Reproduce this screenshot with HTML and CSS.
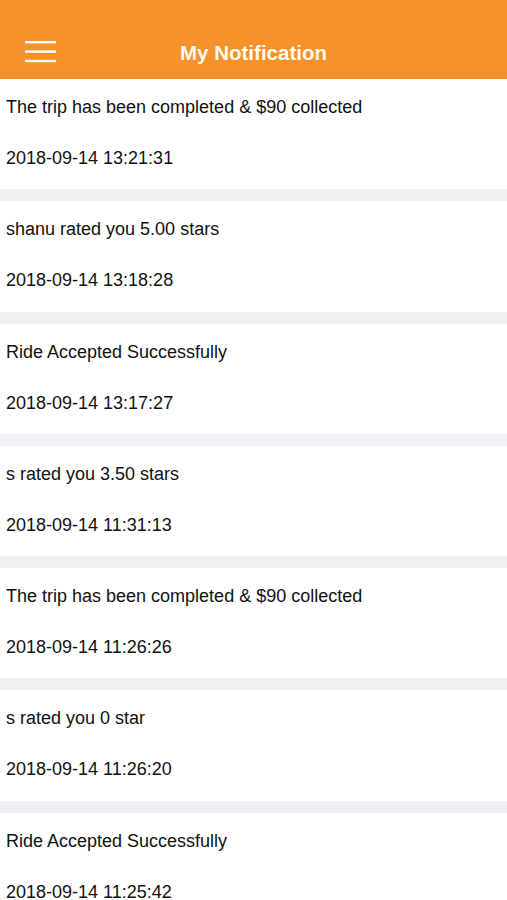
FILE: index.html
```html
<!DOCTYPE html>
<html>
<head>
<meta charset="utf-8">
<link rel="stylesheet" href="styles.css">
</head>
<body>
<header class="bar">
  <svg class="menu" width="31" height="22" viewBox="0 0 31 22">
    <rect x="0" y="0" width="31" height="2.4" fill="#fff"/>
    <rect x="0" y="9.4" width="31" height="2.4" fill="#fff"/>
    <rect x="0" y="18.8" width="31" height="2.4" fill="#fff"/>
  </svg>
  <h1 class="title">My Notification</h1>
</header>
<main class="list">
  <div class="card"><div class="msg">The trip has been completed &amp; $90 collected</div><div class="date">2018-09-14 13:21:31</div></div>
  <div class="card"><div class="msg">shanu rated you 5.00 stars</div><div class="date">2018-09-14 13:18:28</div></div>
  <div class="card"><div class="msg">Ride Accepted Successfully</div><div class="date">2018-09-14 13:17:27</div></div>
  <div class="card"><div class="msg">s rated you 3.50 stars</div><div class="date">2018-09-14 11:31:13</div></div>
  <div class="card"><div class="msg">The trip has been completed &amp; $90 collected</div><div class="date">2018-09-14 11:26:26</div></div>
  <div class="card"><div class="msg">s rated you 0 star</div><div class="date">2018-09-14 11:26:20</div></div>
  <div class="card"><div class="msg">Ride Accepted Successfully</div><div class="date">2018-09-14 11:25:42</div></div>
</main>
</body>
</html>
```
FILE: styles.css
```css
* { box-sizing: border-box; }
html, body { margin: 0; padding: 0; }
body {
  width: 507px;
  height: 900px;
  overflow: hidden;
  background: #efeff4;
  font-family: "Liberation Sans", Arial, sans-serif;
  color: #111111;
}
.bar {
  position: relative;
  height: 79px;
  background: #f7922a;
  display: flex;
  align-items: flex-end;
  justify-content: center;
  padding-bottom: 14px;
}
.menu {
  position: absolute;
  left: 25px;
  top: 41px;
}
.title {
  margin: 0;
  font-size: 20.5px;
  font-weight: bold;
  color: #fffaf0;
  line-height: 24px;
}
.list {
  display: flex;
  flex-direction: column;
  gap: 12px;
}
.card {
  background: #fff;
  padding: 18px 6px 21.3px;
}
.msg, .date {
  font-size: 18px;
  line-height: 20px;
}
.date { margin-top: 31px; }
```
